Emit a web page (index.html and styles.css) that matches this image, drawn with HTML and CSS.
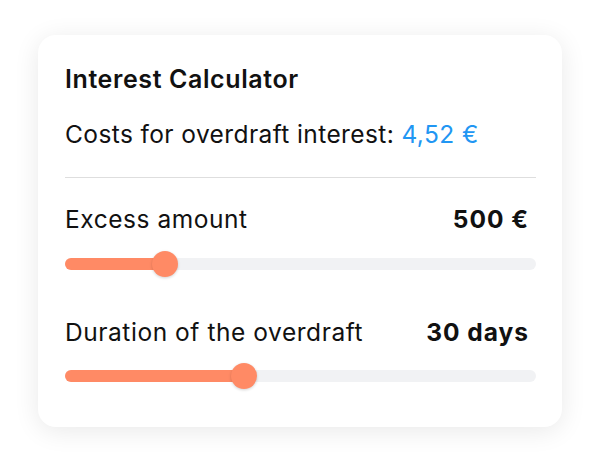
FILE: index.html
```html
<!DOCTYPE html>
<html lang="en">
<head>
<meta charset="utf-8">
<title>Interest Calculator</title>
<link rel="stylesheet" href="styles.css">
</head>
<body>
  <div class="card">
    <h1 class="title">Interest Calculator</h1>
    <p class="costs">Costs for overdraft interest: <span class="amount">4,52 €</span></p>
    <hr class="divider">
    <div class="field">
      <div class="field-head">
        <span class="label">Excess amount</span>
        <span class="value">500 €</span>
      </div>
      <div class="slider">
        <div class="fill" style="width: 21.2%"><span class="thumb"></span></div>
      </div>
    </div>
    <div class="field">
      <div class="field-head">
        <span class="label">Duration of the overdraft</span>
        <span class="value">30 days</span>
      </div>
      <div class="slider">
        <div class="fill" style="width: 38.1%"><span class="thumb"></span></div>
      </div>
    </div>
  </div>
</body>
</html>
```

FILE: styles.css
```css
html, body {
  margin: 0;
  padding: 0;
  background: #ffffff;
}
body {
  padding: 35px 38px;
  font-family: Inter, "Noto Sans", sans-serif;
  color: #111111;
}
.card {
  width: 524px;
  height: 392px;
  box-sizing: border-box;
  background: #ffffff;
  border-radius: 18px;
  box-shadow: 0 4px 26px rgba(0, 0, 0, 0.09);
  padding: 29px 26px 0 27px;
  display: flex;
  flex-direction: column;
}
.title {
  margin: 0;
  font-size: 25px;
  line-height: 30px;
  font-weight: 600;
  letter-spacing: 0.6px;
}
.costs {
  margin: 25px 0 0;
  font-size: 24.5px;
  line-height: 30px;
  font-weight: 400;
  letter-spacing: 0.4px;
}
.amount {
  color: #2196f3;
}
.divider {
  margin: 28px 0 0;
  border: 0;
  height: 1px;
  background: #dedede;
}
.field {
  display: flex;
  flex-direction: column;
}
.field-head {
  margin-top: 26px;
  display: flex;
  justify-content: space-between;
  align-items: baseline;
  font-size: 24.5px;
  line-height: 30px;
}
.label {
  letter-spacing: 0.55px;
}
.field + .field .field-head {
  margin-top: 47px;
}
.value {
  font-weight: 700;
  letter-spacing: 1px;
  margin-right: 7px;
}
.slider {
  margin-top: 24px;
  height: 12px;
  border-radius: 6px;
  background: #f1f2f4;
}
.field + .field .slider {
  margin-top: 23px;
}
.fill {
  position: relative;
  height: 100%;
  border-radius: 6px;
  background: #ff8a65;
}
.thumb {
  position: absolute;
  right: -13px;
  top: 50%;
  width: 26px;
  height: 26px;
  margin-top: -13px;
  border-radius: 50%;
  background: #ff8a65;
  box-shadow: 0 1px 3px rgba(0, 0, 0, 0.18);
}
```
